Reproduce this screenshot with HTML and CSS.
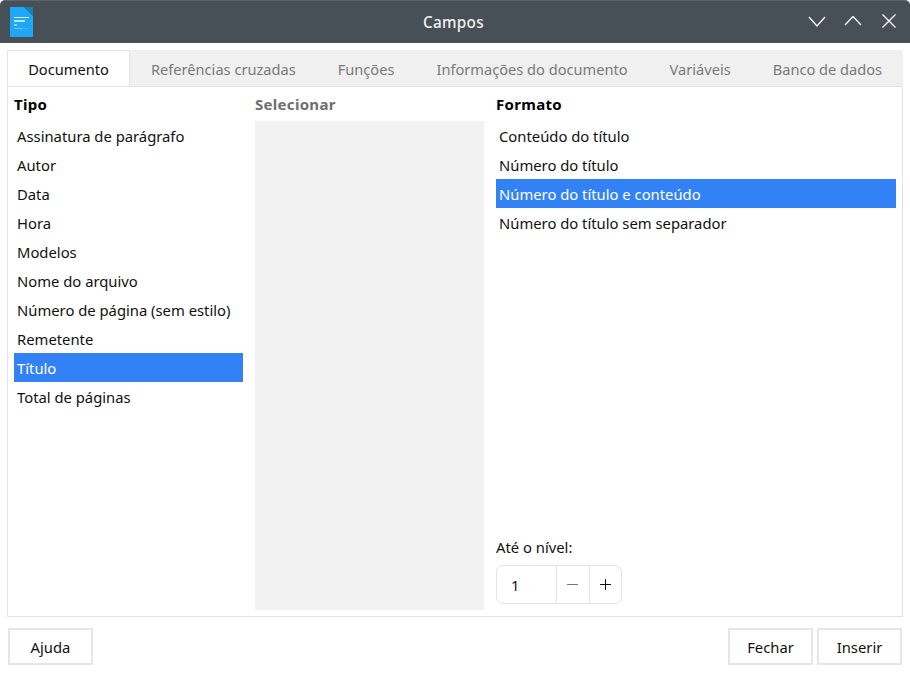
FILE: index.html
```html
<!DOCTYPE html>
<html lang="pt-BR">
<head>
<meta charset="utf-8">
<title>Campos</title>
<link rel="stylesheet" href="styles.css">
</head>
<body>
<div class="dialog">
  <header class="titlebar">
    <svg class="app-icon" width="24" height="31" viewBox="0 0 24 31">
      <path d="M0 0H14L23 9V30H0Z" fill="#1ea7f5"/>
      <path d="M14 0H23V9Z" fill="#1a7fb5"/>
      <path d="M4 10H19V11H4Z" fill="#d3eefc"/>
      <path d="M4 13H15V15H4Z" fill="#b9e4fb"/>
      <path d="M4 17H7V19H4Z" fill="#8fd3f8"/>
      <path d="M4 21H13V22H4ZM15 21H17V22H15Z" fill="#6cc4f5"/>
    </svg>
    <h1 class="title">Campos</h1>
    <div class="win-buttons">
      <svg width="18" height="12" viewBox="0 0 18 12"><path d="M1 1L9 10L17 1" class="win-stroke"/></svg>
      <svg width="18" height="12" viewBox="0 0 18 12"><path d="M1 9L9 0.500L17 9" class="win-stroke"/></svg>
      <svg class="win-close" width="14" height="14" viewBox="0 0 14 14"><path d="M0.500 0.500L13.500 13.500M13.500 0.500L0.500 13.500" class="win-stroke"/></svg>
    </div>
  </header>

  <main class="content">
    <nav class="tabs">
      <div class="tab active">Documento</div>
      <div class="tab">Referências cruzadas</div>
      <div class="tab">Funções</div>
      <div class="tab">Informações do documento</div>
      <div class="tab">Variáveis</div>
      <div class="tab">Banco de dados</div>
    </nav>

    <section class="panel">
      <div class="col col-type">
        <div class="col-head">Tipo</div>
        <ul class="list">
          <li>Assinatura de parágrafo</li>
          <li>Autor</li>
          <li>Data</li>
          <li>Hora</li>
          <li>Modelos</li>
          <li>Nome do arquivo</li>
          <li>Número de página (sem estilo)</li>
          <li>Remetente</li>
          <li class="selected">Título</li>
          <li>Total de páginas</li>
        </ul>
      </div>

      <div class="col col-select">
        <div class="col-head disabled">Selecionar</div>
        <div class="empty-list"></div>
      </div>

      <div class="col col-format">
        <div class="col-head">Formato</div>
        <ul class="list grow">
          <li>Conteúdo do título</li>
          <li>Número do título</li>
          <li class="selected">Número do título e conteúdo</li>
          <li>Número do título sem separador</li>
        </ul>
        <label class="level-label">Até o nível:</label>
        <div class="spin">
          <span class="spin-value">1</span>
          <span class="spin-btn minus"><svg width="11" height="11" viewBox="0 0 11 11"><path d="M0 5.500H11" class="spin-stroke"/></svg></span>
          <span class="spin-btn"><svg width="11" height="11" viewBox="0 0 11 11"><path d="M0 5.500H11M5.500 0V11" class="spin-stroke"/></svg></span>
        </div>
      </div>
    </section>

    <footer class="actions">
      <button class="btn">Ajuda</button>
      <span class="spacer"></span>
      <button class="btn">Fechar</button>
      <button class="btn">Inserir</button>
    </footer>
  </main>
</div>
</body>
</html>
```
FILE: styles.css
```css
* { box-sizing: border-box; }

html, body {
  margin: 0;
  width: 910px;
  height: 673px;
  overflow: hidden;
  background: #fff;
}

body {
  font-family: "Noto Sans", "Open Sans", sans-serif;
  font-size: 14.800px;
  color: #111;
}

.dialog {
  display: flex;
  flex-direction: column;
  height: 673px;
}

/* Window title bar: icon, centred title, window buttons */
.titlebar {
  flex: none;
  height: 43px;
  display: grid;
  grid-template-columns: 1fr auto 1fr;
  align-items: center;
  padding: 0 14px 0 10px;
  background: #474f57;
  border-top: 1px solid #5d646b;
  border-radius: 5px 5px 0 0;
}

.title {
  margin: 0 0 0 1px;
  font-size: 15.300px;
  font-weight: 500;
  color: #f2f2f2;
  letter-spacing: .3px;
}

.win-buttons {
  display: flex;
  justify-content: flex-end;
  align-items: center;
  gap: 18px;
}

.win-close {
  margin: -2px 0 0 2px;
}

.win-stroke {
  fill: none;
  stroke: #f5f5f5;
  stroke-width: 1.400;
}

/* Dialog body */
.content {
  flex: 1;
  display: flex;
  flex-direction: column;
  padding: 7px 7px 8px 7px;
}

.tabs {
  flex: none;
  display: flex;
  height: 36px;
  background: #f0f0f0;
}

.tab {
  flex: none;
  padding: 0 21px;
  font-size: 14.620px;
  line-height: 38px;
  white-space: nowrap;
  color: #7a7a7a;
}

.tab.active {
  background: #fff;
  color: #111;
  border: 1px solid #e3e3e3;
  border-bottom: none;
  width: 123px;
  padding: 0;
  text-align: center;
  line-height: 36px;
}

.panel {
  flex: none;
  height: 531px;
  display: flex;
  gap: 12px;
  padding: 6px 6px 6px 6px;
  border: 1px solid #e3e3e3;
}

.col {
  display: flex;
  flex-direction: column;
}

.col-type, .col-select { width: 229px; }
.col-format { flex: 1; }

.col-head {
  flex: none;
  height: 28px;
  line-height: 22px;
  font-size: 15px;
  letter-spacing: .3px;
  font-weight: 700;
  color: #000;
}

.col-head.disabled { color: #6f6f6f; }

.list {
  list-style: none;
  margin: 0;
  padding: 0;
}

.list li {
  height: 29px;
  line-height: 30px;
  padding-left: 3px;
  white-space: nowrap;
}

.list li.selected {
  background: #3282f6;
  color: #fff;
}

.grow { flex: 1; }

.empty-list {
  flex: 1;
  background: #f2f2f2;
}

.level-label {
  height: 28px;
  line-height: 20px;
}

.spin {
  display: flex;
  align-items: stretch;
  width: 126px;
  height: 39px;
  margin-bottom: 6px;
  border: 1px solid #e3e3e3;
  border-radius: 7px;
}

.spin-value {
  width: 59px;
  padding-left: 14px;
  line-height: 38px;
}

.spin-btn {
  flex: 1;
  display: flex;
  align-items: center;
  justify-content: center;
  border-left: 1px solid #e3e3e3;
}

.spin-stroke {
  fill: none;
  stroke: #111;
  stroke-width: 1;
}

.minus .spin-stroke { stroke: #777; }

/* Bottom action row */
.actions {
  flex: none;
  display: flex;
  gap: 4px;
  margin-top: 11px;
  padding: 0 1px;
}

.spacer { flex: 1; }

.btn {
  width: 85px;
  height: 37px;
  padding: 0;
  font: inherit;
  color: #111;
  background: #fff;
  border: 2px solid #e6e6e6;
}
```
